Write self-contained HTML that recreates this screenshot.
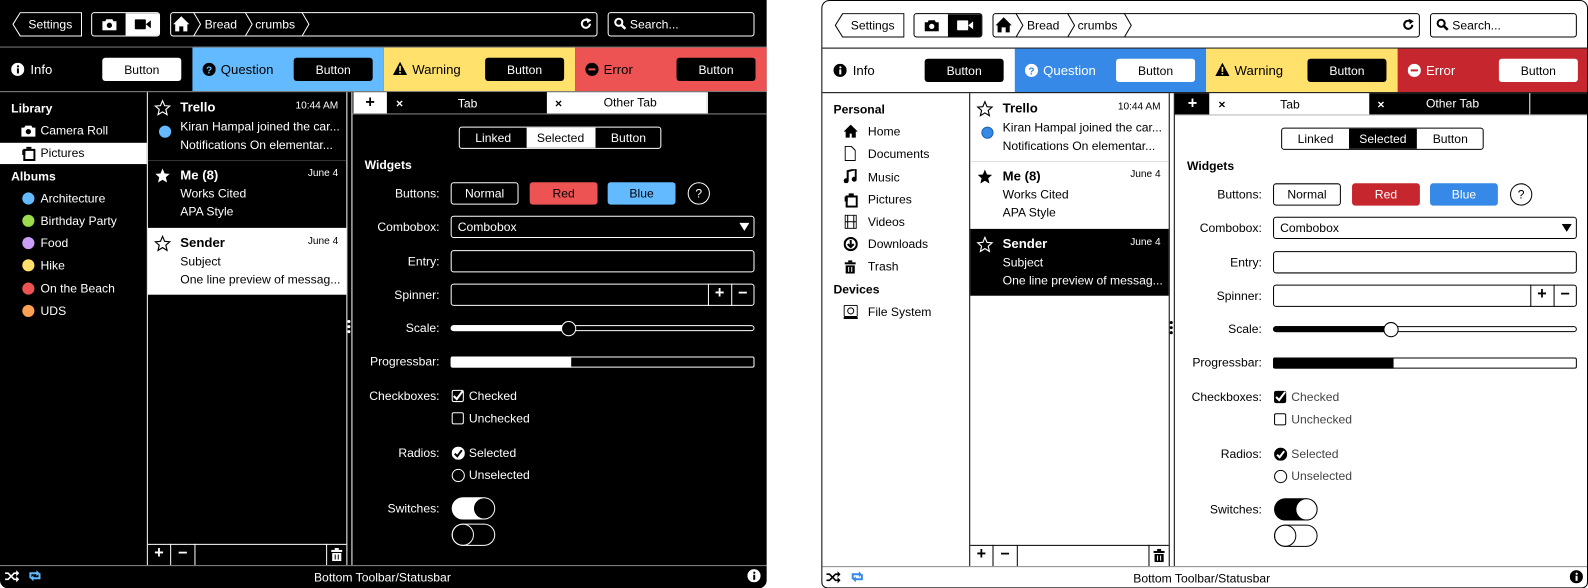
<!DOCTYPE html>
<html><head><meta charset="utf-8">
<style>
*{box-sizing:border-box;margin:0;padding:0}
html,body{width:1588px;height:588px;overflow:hidden;background:#fff;font-family:"Liberation Sans",sans-serif;font-size:12px}
#wrap{position:absolute;left:0;top:0;width:1568px;height:581px;transform:scale(1.01276);transform-origin:0 0}
.w{position:absolute;top:0;width:757px;height:581px;overflow:hidden;background:var(--bg);color:var(--fg)}
.dark{--bg:#000;--fg:#fff;left:0;border-radius:0 0 8px 8px}
.light{--bg:#fff;--fg:#000;left:811px;border:1px solid #000;border-radius:8px 8px 6px 6px}
.a{position:absolute}
.t{position:absolute;line-height:16px;white-space:nowrap}
.inv{background:var(--fg);color:var(--bg)}
.b{border:1px solid var(--fg);border-radius:3px}
.hl{position:absolute;height:1px;background:var(--fg)}
.vl{position:absolute;width:1px;background:var(--fg)}
.c{display:flex;align-items:center;justify-content:center}
.bold{font-weight:bold}
.r{text-align:right}
svg{display:block}
.dot{position:absolute;width:12px;height:12px;border-radius:50%}
</style></head><body><div id="wrap">

<!-- ================= DARK ================= -->
<div class="w dark">
 <svg class="a" style="left:12px;top:12px" width="69" height="24"><path d="M8 .5H68.5V23.5H8L.8 12Z" fill="none" stroke="#fff"/></svg>
 <div class="t" style="left:28px;top:16px">Settings</div>
 <div class="a b" style="left:90px;top:12px;width:68px;height:24px;overflow:hidden">
  <div class="a c" style="left:0;top:0;width:33px;height:22px"><svg width="14" height="12" viewBox="0 0 14 12"><path d="M4 1h6l1 2h3v9H0V3h3z" fill="#fff"/><circle cx="7" cy="7" r="2.6" fill="#000"/></svg></div>
  <div class="a c inv" style="left:33px;top:0;width:34px;height:22px"><svg width="16" height="10" viewBox="0 0 16 10"><rect x="0" y="0" width="11" height="10" rx="1" fill="#000"/><path d="M11 5l5-4v8z" fill="#000"/></svg></div>
 </div>
 <div class="a b" style="left:168px;top:12px;width:422px;height:24px"></div>
 <svg class="a" style="left:168px;top:12px" width="140" height="24"><path d="M23 0l7 12-7 12M74 0l7 12-7 12M130 0l7 12-7 12" fill="none" stroke="#fff"/><path d="M11 4l-8 8h2v7h4v-5h4v5h4v-7h2z" fill="#fff"/></svg>
 <div class="t" style="left:202px;top:16px">Bread</div>
 <div class="t" style="left:252px;top:16px">crumbs</div>
 <svg class="a" style="left:572px;top:17px" width="13" height="13" viewBox="0 0 13 13"><path d="M10.5 6.5A4 4 0 1 1 8.5 3" fill="none" stroke="#fff" stroke-width="2"/><path d="M7 0.5l5 2.5-4 3z" fill="#fff"/></svg>
 <div class="a b" style="left:600px;top:12px;width:145px;height:24px"></div>
 <svg class="a" style="left:606px;top:17px" width="13" height="13"><circle cx="5" cy="5" r="3.5" fill="none" stroke="#fff" stroke-width="2"/><path d="M7.5 7.5l4 4" stroke="#fff" stroke-width="2.5"/></svg>
 <div class="t" style="left:622px;top:16px">Search...</div>
 <div class="hl" style="left:0;top:46px;width:757px;background:#888"></div>
 <div class="a" style="left:0;top:47px;width:190px;height:43px;background:#000"></div>
 <svg class="a" style="left:11px;top:62px" width="13" height="13"><circle cx="6.5" cy="6.5" r="6.5" fill="#fff"/><rect x="5.7" y="5.5" width="2" height="5" fill="#000"/><circle cx="6.8" cy="3.5" r="1.1" fill="#000"/></svg>
 <div class="t" style="left:30px;top:61px;font-size:13px">Info</div>
 <div class="a c inv" style="left:101px;top:57px;width:78px;height:23px;border-radius:3px">Button</div>
 <div class="a" style="left:190px;top:47px;width:189px;height:43px;background:#64baff;color:#000"></div>
 <svg class="a" style="left:200px;top:62px" width="13" height="13"><circle cx="6.5" cy="6.5" r="6.5" fill="#000"/><text x="6.5" y="10.5" text-anchor="middle" font-size="10" font-weight="bold" fill="#64baff" font-family="Liberation Sans">?</text></svg>
 <div class="t" style="left:218px;top:61px;font-size:13px;color:#000">Question</div>
 <div class="a c" style="left:290px;top:57px;width:78px;height:23px;border-radius:3px;background:#000;color:#fff">Button</div>
 <div class="a" style="left:379px;top:47px;width:189px;height:43px;background:#ffe16b"></div>
 <svg class="a" style="left:388px;top:61px" width="14" height="13"><path d="M7 0L14 13H0Z" fill="#000"/><rect x="6.2" y="4" width="1.6" height="5" fill="#ffe16b"/><rect x="6.2" y="10" width="1.6" height="1.6" fill="#ffe16b"/></svg>
 <div class="t" style="left:407px;top:61px;font-size:13px;color:#000">Warning</div>
 <div class="a c" style="left:479px;top:57px;width:78px;height:23px;border-radius:3px;background:#000;color:#fff">Button</div>
 <div class="a" style="left:568px;top:47px;width:189px;height:43px;background:#ed5353"></div>
 <svg class="a" style="left:578px;top:62px" width="13" height="13"><circle cx="6.5" cy="6.5" r="6.5" fill="#000"/><rect x="3" y="5.5" width="7" height="2" fill="#ed5353"/></svg>
 <div class="t" style="left:596px;top:61px;font-size:13px;color:#000">Error</div>
 <div class="a c" style="left:668px;top:57px;width:78px;height:23px;border-radius:3px;background:#000;color:#fff">Button</div>
 <div class="hl" style="left:0;top:90px;width:757px;background:#888"></div>
 <div class="t bold" style="left:11px;top:99px">Library</div>
 <svg class="a" style="left:21px;top:123px" width="14" height="12" viewBox="0 0 14 12"><path d="M4 1h6l1 2h3v9H0V3h3z" fill="#fff"/><circle cx="7" cy="7" r="2.6" fill="#000"/></svg>
 <div class="t" style="left:40px;top:121px">Camera Roll</div>
 <div class="a inv" style="left:0;top:141px;width:145px;height:21px"></div>
 <svg class="a" style="left:21px;top:144px" width="14" height="15"><rect x="3" y="4" width="10" height="10" fill="none" stroke="#000" stroke-width="2"/><path d="M1 4h3v5H1zM5 1h5v2H5z" fill="#000"/></svg>
 <div class="t" style="left:40px;top:143px;color:#000">Pictures</div>
 <div class="t bold" style="left:11px;top:166px">Albums</div>
 <div class="dot" style="left:22px;top:190px;background:#64baff"></div><div class="t" style="left:40px;top:188px">Architecture</div>
 <div class="dot" style="left:22px;top:212px;background:#9bdb4d"></div><div class="t" style="left:40px;top:210px">Birthday Party</div>
 <div class="dot" style="left:22px;top:234px;background:#cd9ef7"></div><div class="t" style="left:40px;top:232px">Food</div>
 <div class="dot" style="left:22px;top:256px;background:#ffe16b"></div><div class="t" style="left:40px;top:254px">Hike</div>
 <div class="dot" style="left:22px;top:279px;background:#ed5353"></div><div class="t" style="left:40px;top:277px">On the Beach</div>
 <div class="dot" style="left:22px;top:301px;background:#ffa154"></div><div class="t" style="left:40px;top:299px">UDS</div>
 <div class="vl" style="left:145px;top:91px;height:467px"></div>
 <div class="vl" style="left:342px;top:91px;height:467px"></div>
 <div class="vl" style="left:347px;top:91px;height:467px"></div>
 <div class="a" style="left:343px;top:316px;width:3px;height:3px;border-radius:50%;background:#fff"></div>
 <div class="a" style="left:343px;top:321px;width:3px;height:3px;border-radius:50%;background:#fff"></div>
 <div class="a" style="left:343px;top:326px;width:3px;height:3px;border-radius:50%;background:#fff"></div>
 <svg class="a" style="left:152px;top:98px" width="17" height="17" viewBox="0 0 24 24"><path d="M12 2l2.9 6.9 7.1.6-5.4 4.7 1.7 7.3L12 17.6 5.7 21.5l1.7-7.3L2 9.5l7.1-.6z" fill="none" stroke="#fff" stroke-width="1.6"/></svg>
 <div class="t bold" style="left:178px;top:98px;font-size:13px">Trello</div>
 <div class="t r" style="left:280px;top:97px;width:54px;font-size:10px">10:44 AM</div>
 <div class="dot" style="left:157px;top:124px;background:#64baff"></div>
 <div class="t" style="left:178px;top:117px">Kiran Hampal joined the car...</div>
 <div class="t" style="left:178px;top:135px">Notifications On elementar...</div>
 <div class="hl" style="left:146px;top:158px;width:196px;background:#333"></div>
 <svg class="a" style="left:152px;top:165px" width="17" height="17" viewBox="0 0 24 24"><path d="M12 2l2.9 6.9 7.1.6-5.4 4.7 1.7 7.3L12 17.6 5.7 21.5l1.7-7.3L2 9.5l7.1-.6z" fill="#fff"/></svg>
 <div class="t bold" style="left:178px;top:165px;font-size:13px">Me (8)</div>
 <div class="t r" style="left:280px;top:164px;width:54px;font-size:10px">June 4</div>
 <div class="t" style="left:178px;top:183px">Works Cited</div>
 <div class="t" style="left:178px;top:201px">APA Style</div>
 <div class="a inv" style="left:146px;top:225px;width:196px;height:66px"></div>
 <svg class="a" style="left:152px;top:232px" width="17" height="17" viewBox="0 0 24 24"><path d="M12 2l2.9 6.9 7.1.6-5.4 4.7 1.7 7.3L12 17.6 5.7 21.5l1.7-7.3L2 9.5l7.1-.6z" fill="none" stroke="#000" stroke-width="1.6"/></svg>
 <div class="t bold" style="left:178px;top:232px;font-size:13px;color:#000">Sender</div>
 <div class="t r" style="left:280px;top:231px;width:54px;font-size:10px;color:#000">June 4</div>
 <div class="t" style="left:178px;top:250px;color:#000">Subject</div>
 <div class="t" style="left:178px;top:268px;color:#000">One line preview of messag...</div>
 <div class="hl" style="left:146px;top:537px;width:196px"></div>
 <div class="vl" style="left:168px;top:537px;height:21px"></div>
 <div class="vl" style="left:192px;top:537px;height:21px"></div>
 <div class="vl" style="left:322px;top:537px;height:21px"></div>
 <div class="t bold c" style="left:146px;top:539px;width:22px;font-size:16px">+</div>
 <div class="t bold c" style="left:169px;top:539px;width:23px;font-size:16px">−</div>
 <svg class="a" style="left:327px;top:541px" width="11" height="13"><rect x="0" y="2" width="11" height="2" fill="#fff"/><rect x="3.5" y="0" width="4" height="2" fill="#fff"/><path d="M1 5h9v8H1z" fill="#fff"/><path d="M4 6.5v5M7 6.5v5" stroke="#000" stroke-width="1"/></svg>
 <div class="a" style="left:348px;top:91px;width:409px;height:22px;background:#000"></div>
 <div class="a c inv bold" style="left:349px;top:91px;width:33px;height:21px;font-size:16px">+</div>
 <div class="t bold" style="left:391px;top:94px;font-size:12px">×</div>
 <div class="t" style="left:452px;top:94px">Tab</div>
 <div class="a inv" style="left:540px;top:91px;width:158px;height:21px"></div>
 <div class="t bold" style="left:548px;top:94px;color:#000">×</div>
 <div class="t" style="left:596px;top:93px;color:#000">Other Tab</div>
 <div class="vl" style="left:698px;top:91px;height:21px"></div>
 <div class="hl" style="left:348px;top:112px;width:409px;background:#888"></div>
 <div class="a b" style="left:453px;top:125px;width:200px;height:22px;overflow:hidden">
  <div class="a c" style="left:0;top:0;width:66px;height:20px">Linked</div>
  <div class="a c inv" style="left:66px;top:0;width:67px;height:20px">Selected</div>
  <div class="a c" style="left:133px;top:0;width:66px;height:20px;border-left:1px solid #fff">Button</div>
 </div>
 <div class="t bold" style="left:360px;top:155px">Widgets</div>
 <div class="t r" style="left:334px;top:183px;width:100px">Buttons:</div>
 <div class="a c b" style="left:445px;top:180px;width:67px;height:22px">Normal</div>
 <div class="a c" style="left:523px;top:180px;width:67px;height:22px;border-radius:3px;background:#ed5353;color:#000;border:1px solid #ed5353">Red</div>
 <div class="a c" style="left:600px;top:180px;width:67px;height:22px;border-radius:3px;background:#64baff;color:#000">Blue</div>
 <div class="a c" style="left:679px;top:180px;width:22px;height:22px;border-radius:50%;border:1px solid #fff">?</div>
 <div class="t r" style="left:334px;top:216px;width:100px">Combobox:</div>
 <div class="a b" style="left:445px;top:213px;width:300px;height:22px"></div>
 <div class="t" style="left:452px;top:216px">Combobox</div>
 <svg class="a" style="left:730px;top:220px" width="10" height="8"><path d="M0 0h10L5 8z" fill="#fff"/></svg>
 <div class="t r" style="left:334px;top:250px;width:100px">Entry:</div>
 <div class="a b" style="left:445px;top:247px;width:300px;height:22px"></div>
 <div class="t r" style="left:334px;top:283px;width:100px">Spinner:</div>
 <div class="a b" style="left:445px;top:280px;width:300px;height:22px"></div>
 <div class="vl" style="left:699px;top:280px;height:22px"></div>
 <div class="vl" style="left:722px;top:280px;height:22px"></div>
 <div class="t bold c" style="left:699px;top:282px;width:23px;font-size:16px">+</div>
 <div class="t bold c" style="left:722px;top:282px;width:23px;font-size:16px">−</div>
 <div class="t r" style="left:334px;top:316px;width:100px">Scale:</div>
 <div class="a" style="left:445px;top:321px;width:300px;height:6px;border:1px solid #fff;border-radius:3px"></div>
 <div class="a" style="left:445px;top:321px;width:117px;height:6px;background:#fff;border-radius:3px"></div>
 <div class="a" style="left:554px;top:317px;width:15px;height:15px;border-radius:50%;background:#000;border:1px solid #fff"></div>
 <div class="t r" style="left:334px;top:349px;width:100px">Progressbar:</div>
 <div class="a" style="left:445px;top:352px;width:300px;height:11px;border:1px solid #fff;border-radius:2px"></div>
 <div class="a" style="left:445px;top:352px;width:119px;height:11px;background:#fff;border-radius:2px 0 0 2px"></div>
 <div class="t r" style="left:334px;top:383px;width:100px">Checkboxes:</div>
 <div class="a" style="left:446px;top:385px;width:12px;height:12px;border:1px solid #fff;border-radius:2px"></div>
 <svg class="a" style="left:446px;top:384px" width="13" height="13"><path d="M2 7l3 3 6-8" fill="none" stroke="#fff" stroke-width="2"/></svg>
 <div class="t" style="left:463px;top:383px">Checked</div>
 <div class="a" style="left:446px;top:407px;width:12px;height:12px;border:1px solid #fff;border-radius:2px"></div>
 <div class="t" style="left:463px;top:405px">Unchecked</div>
 <div class="t r" style="left:334px;top:439px;width:100px">Radios:</div>
 <svg class="a" style="left:446px;top:441px" width="13" height="13"><circle cx="6.5" cy="6.5" r="6.5" fill="#fff"/><path d="M3 7l2.5 2.5 4.5-6" fill="none" stroke="#000" stroke-width="2"/></svg>
 <div class="t" style="left:463px;top:439px">Selected</div>
 <div class="a" style="left:446px;top:463px;width:13px;height:13px;border:1px solid #fff;border-radius:50%"></div>
 <div class="t" style="left:463px;top:461px">Unselected</div>
 <div class="t r" style="left:334px;top:494px;width:100px">Switches:</div>
 <div class="a" style="left:446px;top:491px;width:43px;height:22px;border-radius:11px;background:#fff"></div>
 <div class="a" style="left:468px;top:492px;width:20px;height:20px;border-radius:50%;background:#000"></div>
 <div class="a" style="left:446px;top:517px;width:43px;height:22px;border-radius:11px;border:1px solid #fff"></div>
 <div class="a" style="left:446px;top:517px;width:22px;height:22px;border-radius:50%;border:1px solid #fff"></div>
 <div class="hl" style="left:0;top:558px;width:757px;background:#888"></div>
 <svg class="a" style="left:5px;top:563px" width="14" height="12"><path d="M0 3h3l6 6h3M0 9h3l6-6h3" fill="none" stroke="#fff" stroke-width="1.6"/><path d="M11 0l3 3-3 3zM11 6l3 3-3 3z" fill="#fff"/></svg>
 <svg class="a" style="left:27px;top:562px" width="15" height="13"><path d="M3 9V4h8M12 4v5H4" fill="none" stroke="#64baff" stroke-width="2"/><path d="M9 1l3 3-3 3zM6 6l-3 3 3 3z" fill="#64baff"/></svg>
 <div class="t" style="left:310px;top:562px">Bottom Toolbar/Statusbar</div>
 <svg class="a" style="left:738px;top:562px" width="13" height="13"><circle cx="6.5" cy="6.5" r="6.5" fill="#fff"/><rect x="5.7" y="5.5" width="2" height="5" fill="#000"/><circle cx="6.8" cy="3.5" r="1.1" fill="#000"/></svg>
</div>

<!-- ================= LIGHT ================= -->
<div class="w light">
 <svg class="a" style="left:12px;top:12px" width="69" height="24"><path d="M8 .5H68.5V23.5H8L.8 12Z" fill="none" stroke="#000"/></svg>
 <div class="t" style="left:28px;top:16px">Settings</div>
 <div class="a b" style="left:90px;top:12px;width:68px;height:24px;overflow:hidden">
  <div class="a c" style="left:0;top:0;width:33px;height:22px"><svg width="14" height="12" viewBox="0 0 14 12"><path d="M4 1h6l1 2h3v9H0V3h3z" fill="#000"/><circle cx="7" cy="7" r="2.6" fill="#fff"/></svg></div>
  <div class="a c inv" style="left:33px;top:0;width:34px;height:22px"><svg width="16" height="10" viewBox="0 0 16 10"><rect x="0" y="0" width="11" height="10" rx="1" fill="#fff"/><path d="M11 5l5-4v8z" fill="#fff"/></svg></div>
 </div>
 <div class="a b" style="left:168px;top:12px;width:422px;height:24px"></div>
 <svg class="a" style="left:168px;top:12px" width="140" height="24"><path d="M23 0l7 12-7 12M74 0l7 12-7 12M130 0l7 12-7 12" fill="none" stroke="#000"/><path d="M11 4l-8 8h2v7h4v-5h4v5h4v-7h2z" fill="#000"/></svg>
 <div class="t" style="left:202px;top:16px">Bread</div>
 <div class="t" style="left:252px;top:16px">crumbs</div>
 <svg class="a" style="left:572px;top:17px" width="13" height="13" viewBox="0 0 13 13"><path d="M10.5 6.5A4 4 0 1 1 8.5 3" fill="none" stroke="#000" stroke-width="2"/><path d="M7 0.5l5 2.5-4 3z" fill="#000"/></svg>
 <div class="a b" style="left:600px;top:12px;width:145px;height:24px"></div>
 <svg class="a" style="left:606px;top:17px" width="13" height="13"><circle cx="5" cy="5" r="3.5" fill="none" stroke="#000" stroke-width="2"/><path d="M7.5 7.5l4 4" stroke="#000" stroke-width="2.5"/></svg>
 <div class="t" style="left:622px;top:16px">Search...</div>
 <div class="hl" style="left:0;top:46px;width:757px"></div>
 <svg class="a" style="left:11px;top:62px" width="13" height="13"><circle cx="6.5" cy="6.5" r="6.5" fill="#000"/><rect x="5.7" y="5.5" width="2" height="5" fill="#fff"/><circle cx="6.8" cy="3.5" r="1.1" fill="#fff"/></svg>
 <div class="t" style="left:30px;top:61px;font-size:13px">Info</div>
 <div class="a c inv" style="left:101px;top:57px;width:78px;height:23px;border-radius:3px">Button</div>
 <div class="a" style="left:190px;top:47px;width:189px;height:43px;background:#3689e6"></div>
 <svg class="a" style="left:200px;top:62px" width="13" height="13"><circle cx="6.5" cy="6.5" r="6.5" fill="#fff"/><text x="6.5" y="10.5" text-anchor="middle" font-size="10" font-weight="bold" fill="#3689e6" font-family="Liberation Sans">?</text></svg>
 <div class="t" style="left:218px;top:61px;font-size:13px;color:#fff">Question</div>
 <div class="a c" style="left:290px;top:57px;width:78px;height:23px;border-radius:3px;background:#fff;color:#000">Button</div>
 <div class="a" style="left:379px;top:47px;width:189px;height:43px;background:#ffe16b"></div>
 <svg class="a" style="left:388px;top:61px" width="14" height="13"><path d="M7 0L14 13H0Z" fill="#000"/><rect x="6.2" y="4" width="1.6" height="5" fill="#ffe16b"/><rect x="6.2" y="10" width="1.6" height="1.6" fill="#ffe16b"/></svg>
 <div class="t" style="left:407px;top:61px;font-size:13px;color:#000">Warning</div>
 <div class="a c" style="left:479px;top:57px;width:78px;height:23px;border-radius:3px;background:#000;color:#fff">Button</div>
 <div class="a" style="left:568px;top:47px;width:189px;height:43px;background:#c6262e"></div>
 <svg class="a" style="left:578px;top:62px" width="13" height="13"><circle cx="6.5" cy="6.5" r="6.5" fill="#fff"/><rect x="3" y="5.5" width="7" height="2" fill="#c6262e"/></svg>
 <div class="t" style="left:596px;top:61px;font-size:13px;color:#fff">Error</div>
 <div class="a c" style="left:668px;top:57px;width:78px;height:23px;border-radius:3px;background:#fff;color:#000">Button</div>
 <div class="hl" style="left:0;top:90px;width:757px"></div>
 <div class="t bold" style="left:11px;top:99px">Personal</div>
 <svg class="a" style="left:21px;top:122px" width="14" height="13"><path d="M7 0L0 7h2v6h4V9h2v4h4V7h2z" fill="#000"/></svg>
 <div class="t" style="left:45px;top:121px">Home</div>
 <svg class="a" style="left:22px;top:143px" width="11" height="15"><path d="M.5 .5h6l4 4v10H.5z" fill="none" stroke="#000"/></svg>
 <div class="t" style="left:45px;top:143px">Documents</div>
 <svg class="a" style="left:21px;top:166px" width="13" height="14"><path d="M4 11V2l8-2v9" fill="none" stroke="#000" stroke-width="2"/><circle cx="2.5" cy="11.5" r="2.5" fill="#000"/><circle cx="10.5" cy="10" r="2.5" fill="#000"/></svg>
 <div class="t" style="left:45px;top:166px">Music</div>
 <svg class="a" style="left:21px;top:189px" width="14" height="15"><rect x="3" y="4" width="10" height="10" fill="none" stroke="#000" stroke-width="2"/><path d="M1 4h3v5H1zM5 1h5v2H5z" fill="#000"/></svg>
 <div class="t" style="left:45px;top:188px">Pictures</div>
 <svg class="a" style="left:22px;top:211px" width="12" height="14"><rect x=".5" y=".5" width="11" height="13" fill="none" stroke="#000"/><path d="M.5 7h11M3 .5v13M9 .5v13" stroke="#000"/></svg>
 <div class="t" style="left:45px;top:210px">Videos</div>
 <svg class="a" style="left:21px;top:233px" width="14" height="14"><circle cx="7" cy="7" r="6" fill="none" stroke="#000" stroke-width="2"/><path d="M7 3v6M4 7l3 3 3-3" fill="none" stroke="#000" stroke-width="2"/></svg>
 <div class="t" style="left:45px;top:232px">Downloads</div>
 <svg class="a" style="left:22px;top:256px" width="11" height="13"><rect x="0" y="2" width="11" height="2" fill="#000"/><rect x="3.5" y="0" width="4" height="2" fill="#000"/><path d="M1 5h9v8H1z" fill="#000"/><path d="M4 6.5v5M7 6.5v5" stroke="#fff"/></svg>
 <div class="t" style="left:45px;top:254px">Trash</div>
 <div class="t bold" style="left:11px;top:277px">Devices</div>
 <svg class="a" style="left:21px;top:300px" width="14" height="14"><rect x=".5" y=".5" width="13" height="11" rx="1" fill="none" stroke="#000"/><circle cx="7" cy="6" r="3" fill="none" stroke="#000"/><rect x="0" y="12" width="14" height="2" fill="#000"/></svg>
 <div class="t" style="left:45px;top:299px">File System</div>
 <div class="vl" style="left:145px;top:91px;height:467px"></div>
 <div class="vl" style="left:342px;top:91px;height:467px"></div>
 <div class="vl" style="left:347px;top:91px;height:467px"></div>
 <div class="a" style="left:343px;top:316px;width:3px;height:3px;border-radius:50%;background:#000"></div>
 <div class="a" style="left:343px;top:321px;width:3px;height:3px;border-radius:50%;background:#000"></div>
 <div class="a" style="left:343px;top:326px;width:3px;height:3px;border-radius:50%;background:#000"></div>
 <svg class="a" style="left:152px;top:98px" width="17" height="17" viewBox="0 0 24 24"><path d="M12 2l2.9 6.9 7.1.6-5.4 4.7 1.7 7.3L12 17.6 5.7 21.5l1.7-7.3L2 9.5l7.1-.6z" fill="none" stroke="#000" stroke-width="1.6"/></svg>
 <div class="t bold" style="left:178px;top:98px;font-size:13px">Trello</div>
 <div class="t r" style="left:280px;top:97px;width:54px;font-size:10px">10:44 AM</div>
 <div class="dot" style="left:157px;top:124px;background:#3689e6;border:1px solid #1a5fb4"></div>
 <div class="t" style="left:178px;top:117px">Kiran Hampal joined the car...</div>
 <div class="t" style="left:178px;top:135px">Notifications On elementar...</div>
 <div class="hl" style="left:146px;top:158px;width:196px;background:#ddd"></div>
 <svg class="a" style="left:152px;top:165px" width="17" height="17" viewBox="0 0 24 24"><path d="M12 2l2.9 6.9 7.1.6-5.4 4.7 1.7 7.3L12 17.6 5.7 21.5l1.7-7.3L2 9.5l7.1-.6z" fill="#000"/></svg>
 <div class="t bold" style="left:178px;top:165px;font-size:13px">Me (8)</div>
 <div class="t r" style="left:280px;top:164px;width:54px;font-size:10px">June 4</div>
 <div class="t" style="left:178px;top:183px">Works Cited</div>
 <div class="t" style="left:178px;top:201px">APA Style</div>
 <div class="a inv" style="left:146px;top:225px;width:196px;height:66px"></div>
 <svg class="a" style="left:152px;top:232px" width="17" height="17" viewBox="0 0 24 24"><path d="M12 2l2.9 6.9 7.1.6-5.4 4.7 1.7 7.3L12 17.6 5.7 21.5l1.7-7.3L2 9.5l7.1-.6z" fill="none" stroke="#fff" stroke-width="1.6"/></svg>
 <div class="t bold" style="left:178px;top:232px;font-size:13px;color:#fff">Sender</div>
 <div class="t r" style="left:280px;top:231px;width:54px;font-size:10px;color:#fff">June 4</div>
 <div class="t" style="left:178px;top:250px;color:#fff">Subject</div>
 <div class="t" style="left:178px;top:268px;color:#fff">One line preview of messag...</div>
 <div class="hl" style="left:146px;top:537px;width:196px"></div>
 <div class="vl" style="left:168px;top:537px;height:21px"></div>
 <div class="vl" style="left:192px;top:537px;height:21px"></div>
 <div class="vl" style="left:322px;top:537px;height:21px"></div>
 <div class="t bold c" style="left:146px;top:539px;width:22px;font-size:16px">+</div>
 <div class="t bold c" style="left:169px;top:539px;width:23px;font-size:16px">−</div>
 <svg class="a" style="left:327px;top:541px" width="11" height="13"><rect x="0" y="2" width="11" height="2" fill="#000"/><rect x="3.5" y="0" width="4" height="2" fill="#000"/><path d="M1 5h9v8H1z" fill="#000"/><path d="M4 6.5v5M7 6.5v5" stroke="#fff"/></svg>
 <div class="a" style="left:348px;top:91px;width:409px;height:22px;background:#000"></div>
 <div class="a c bold" style="left:349px;top:91px;width:33px;height:21px;font-size:16px;color:#fff">+</div>
 <div class="a" style="left:382px;top:91px;width:158px;height:21px;background:#fff"></div>
 <div class="t bold" style="left:391px;top:94px">×</div>
 <div class="t" style="left:452px;top:94px">Tab</div>
 <div class="t bold" style="left:548px;top:94px;color:#fff">×</div>
 <div class="t" style="left:596px;top:93px;color:#fff">Other Tab</div>
 <div class="vl" style="left:698px;top:91px;height:21px;background:#fff"></div>
 <div class="hl" style="left:348px;top:112px;width:409px;background:#ccc"></div>
 <div class="a b" style="left:453px;top:125px;width:200px;height:22px;overflow:hidden">
  <div class="a c" style="left:0;top:0;width:66px;height:20px">Linked</div>
  <div class="a c inv" style="left:66px;top:0;width:67px;height:20px">Selected</div>
  <div class="a c" style="left:133px;top:0;width:66px;height:20px">Button</div>
 </div>
 <div class="t bold" style="left:360px;top:155px">Widgets</div>
 <div class="t r" style="left:334px;top:183px;width:100px">Buttons:</div>
 <div class="a c b" style="left:445px;top:180px;width:67px;height:22px">Normal</div>
 <div class="a c" style="left:523px;top:180px;width:67px;height:22px;border-radius:3px;background:#c6262e;color:#fff">Red</div>
 <div class="a c" style="left:600px;top:180px;width:67px;height:22px;border-radius:3px;background:#3689e6;color:#fff">Blue</div>
 <div class="a c" style="left:679px;top:180px;width:22px;height:22px;border-radius:50%;border:1px solid #000">?</div>
 <div class="t r" style="left:334px;top:216px;width:100px">Combobox:</div>
 <div class="a b" style="left:445px;top:213px;width:300px;height:22px"></div>
 <div class="t" style="left:452px;top:216px">Combobox</div>
 <svg class="a" style="left:730px;top:220px" width="10" height="8"><path d="M0 0h10L5 8z" fill="#000"/></svg>
 <div class="t r" style="left:334px;top:250px;width:100px">Entry:</div>
 <div class="a b" style="left:445px;top:247px;width:300px;height:22px"></div>
 <div class="t r" style="left:334px;top:283px;width:100px">Spinner:</div>
 <div class="a b" style="left:445px;top:280px;width:300px;height:22px"></div>
 <div class="vl" style="left:699px;top:280px;height:22px"></div>
 <div class="vl" style="left:722px;top:280px;height:22px"></div>
 <div class="t bold c" style="left:699px;top:282px;width:23px;font-size:16px">+</div>
 <div class="t bold c" style="left:722px;top:282px;width:23px;font-size:16px">−</div>
 <div class="t r" style="left:334px;top:316px;width:100px">Scale:</div>
 <div class="a" style="left:445px;top:321px;width:300px;height:6px;border:1px solid #000;border-radius:3px"></div>
 <div class="a" style="left:445px;top:321px;width:117px;height:6px;background:#000;border-radius:3px"></div>
 <div class="a" style="left:554px;top:317px;width:15px;height:15px;border-radius:50%;background:#fff;border:1px solid #000"></div>
 <div class="t r" style="left:334px;top:349px;width:100px">Progressbar:</div>
 <div class="a" style="left:445px;top:352px;width:300px;height:11px;border:1px solid #000;border-radius:2px"></div>
 <div class="a" style="left:445px;top:352px;width:119px;height:11px;background:#000;border-radius:2px 0 0 2px"></div>
 <div class="t r" style="left:334px;top:383px;width:100px">Checkboxes:</div>
 <div class="a" style="left:446px;top:385px;width:12px;height:12px;background:#000;border-radius:2px"></div>
 <svg class="a" style="left:446px;top:384px" width="13" height="13"><path d="M2 7l3 3 6-8" fill="none" stroke="#fff" stroke-width="2"/></svg>
 <div class="t" style="left:463px;top:383px;color:#444">Checked</div>
 <div class="a" style="left:446px;top:407px;width:12px;height:12px;border:1px solid #000;border-radius:2px"></div>
 <div class="t" style="left:463px;top:405px;color:#444">Unchecked</div>
 <div class="t r" style="left:334px;top:439px;width:100px">Radios:</div>
 <svg class="a" style="left:446px;top:441px" width="13" height="13"><circle cx="6.5" cy="6.5" r="6.5" fill="#000"/><path d="M3 7l2.5 2.5 4.5-6" fill="none" stroke="#fff" stroke-width="2"/></svg>
 <div class="t" style="left:463px;top:439px;color:#444">Selected</div>
 <div class="a" style="left:446px;top:463px;width:13px;height:13px;border:1px solid #000;border-radius:50%"></div>
 <div class="t" style="left:463px;top:461px;color:#444">Unselected</div>
 <div class="t r" style="left:334px;top:494px;width:100px">Switches:</div>
 <div class="a" style="left:446px;top:491px;width:43px;height:22px;border-radius:11px;background:#000"></div>
 <div class="a" style="left:467px;top:491px;width:22px;height:22px;border-radius:50%;background:#fff;border:1px solid #000"></div>
 <div class="a" style="left:446px;top:517px;width:43px;height:22px;border-radius:11px;border:1px solid #000"></div>
 <div class="a" style="left:446px;top:517px;width:22px;height:22px;border-radius:50%;border:1px solid #000"></div>
 <div class="hl" style="left:0;top:558px;width:757px;background:#888"></div>
 <svg class="a" style="left:4px;top:563px" width="14" height="12"><path d="M0 3h3l6 6h3M0 9h3l6-6h3" fill="none" stroke="#000" stroke-width="1.6"/><path d="M11 0l3 3-3 3zM11 6l3 3-3 3z" fill="#000"/></svg>
 <svg class="a" style="left:27px;top:562px" width="15" height="13"><path d="M3 9V4h8M12 4v5H4" fill="none" stroke="#3689e6" stroke-width="2"/><path d="M9 1l3 3-3 3zM6 6l-3 3 3 3z" fill="#3689e6"/></svg>
 <div class="t" style="left:307px;top:562px">Bottom Toolbar/Statusbar</div>
 <svg class="a" style="left:738px;top:562px" width="13" height="13"><circle cx="6.5" cy="6.5" r="6.5" fill="#000"/><rect x="5.7" y="5.5" width="2" height="5" fill="#fff"/><circle cx="6.8" cy="3.5" r="1.1" fill="#fff"/></svg>
</div>
</div></body></html>
